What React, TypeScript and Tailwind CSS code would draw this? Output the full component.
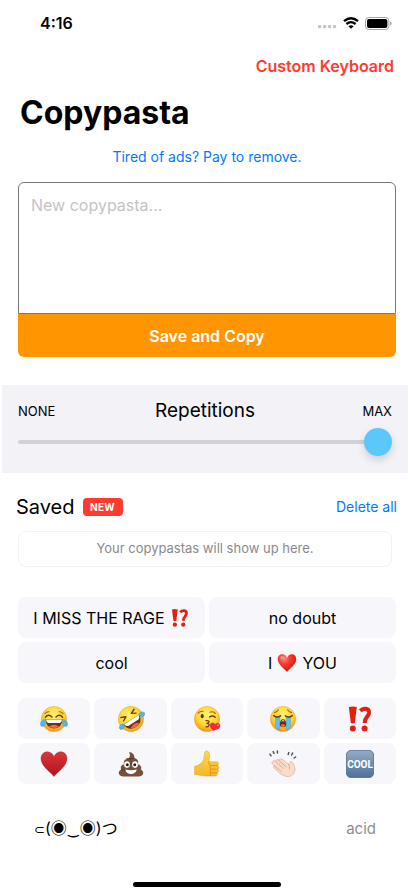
import type { ReactNode } from "react";

type IconProps = { className: string };

function Svg({ className, children }: IconProps & { children: ReactNode }) {
  return (
    <svg viewBox="0 0 28 28" className={className} aria-hidden="true">
      <defs>
        <radialGradient id="face" cx="50%" cy="35%" r="65%">
          <stop offset="0" stopColor="#fff176" />
          <stop offset="0.6" stopColor="#fdd835" />
          <stop offset="1" stopColor="#f0941f" />
        </radialGradient>
        <radialGradient id="shinyHeart" cx="35%" cy="25%" r="80%">
          <stop offset="0" stopColor="#ff8a78" />
          <stop offset="0.4" stopColor="#f5382e" />
          <stop offset="1" stopColor="#c9150f" />
        </radialGradient>
        <linearGradient id="darkHeart" x1="0" y1="0" x2="0" y2="1">
          <stop offset="0" stopColor="#d8383a" />
          <stop offset="1" stopColor="#b0121d" />
        </linearGradient>
        <linearGradient id="thumb" x1="0" y1="0" x2="0" y2="1">
          <stop offset="0" stopColor="#ffd84e" />
          <stop offset="1" stopColor="#f5b62a" />
        </linearGradient>
        <linearGradient id="coolTile" x1="0" y1="0" x2="0" y2="1">
          <stop offset="0" stopColor="#93abc6" />
          <stop offset="1" stopColor="#4f7199" />
        </linearGradient>
      </defs>
      {children}
    </svg>
  );
}

const Face = () => <circle cx="14" cy="14" r="12.6" fill="url(#face)" stroke="#e9a02b" strokeWidth="0.5" />;

function Joy({ className }: IconProps) {
  return (
    <Svg className={className}>
      <Face />
      <path d="M4.8 8.6Q6.6 6.6 9 6.8M23.2 8.6Q21.4 6.6 19 6.8" fill="none" stroke="#a8661a" strokeWidth="1.1" strokeLinecap="round" />
      <path d="M5.4 12.2Q8.4 8.6 12 12M16 12Q19.6 8.6 22.6 12.2" fill="none" stroke="#6b3f13" strokeWidth="1.5" strokeLinecap="round" />
      <path d="M5.4 14.2H22.6Q22 23.4 14 23.4T5.4 14.2Z" fill="#6b3212" />
      <path d="M6 14.4H22Q21.8 17.6 19.8 18H8.2Q6.3 17.6 6 14.4Z" fill="#fff" />
      <path d="M9 21.4Q14 18.2 19 21.4Q14 24.6 9 21.4Z" fill="#ef6a4b" />
      <path d="M5.8 14.4C2.6 14.3.2 16.6.4 19.4.7 22.2 4.6 22 5.2 19.2ZM22.2 14.4C25.4 14.3 27.8 16.6 27.6 19.4 27.3 22.2 23.4 22 22.8 19.2Z" fill="#4cb8ea" stroke="#2e98d4" strokeWidth="0.4" />
    </Svg>
  );
}

function Rofl({ className }: IconProps) {
  return (
    <Svg className={className}>
      <g transform="rotate(-32 14 14)">
        <Face />
        <path d="M6.2 7.4L10.8 9.4L6.6 11.7M21.8 7.4L17.2 9.4L21.4 11.7" fill="none" stroke="#6b3f13" strokeWidth="1.4" strokeLinecap="round" strokeLinejoin="round" />
        <path d="M4.6 14.6H23.4Q22.4 23.4 14 23.4T4.6 14.6Z" fill="#6b3212" />
        <path d="M5.4 14.8H22.6Q22 18 20 18.4H8Q6 18 5.4 14.8Z" fill="#fff" />
        <path d="M9 21.4Q14 18.2 19 21.4Q14 24.6 9 21.4Z" fill="#ef6a4b" />
        <path d="M5.2 14.4C3 12.6-.4 13.6-.8 16-1 18.4 3 18.8 4.4 17ZM22.8 14.4C25 12.6 28.4 13.6 28.8 16 29 18.4 25 18.8 23.6 17Z" fill="#4cb8ea" stroke="#2e98d4" strokeWidth="0.4" />
      </g>
    </Svg>
  );
}

function Kiss({ className }: IconProps) {
  return (
    <Svg className={className}>
      <Face />
      <path d="M5.2 8.2Q7.2 5.6 10 6.4M17 7.2Q20.4 5.8 22.4 8.6" fill="none" stroke="#a8661a" strokeWidth="1.1" strokeLinecap="round" />
      <ellipse cx="9.2" cy="11.2" rx="1.5" ry="2.1" fill="#553313" />
      <path d="M16.6 12Q19.4 9.8 22.2 12.2" fill="none" stroke="#6b3f13" strokeWidth="1.5" strokeLinecap="round" />
      <path d="M13 15.6Q17 15.4 15.8 17.4 15 18.4 13.8 18.4 17 18.6 15.8 20.8 15 22 13 21.8" fill="none" stroke="#7c3510" strokeWidth="1.3" strokeLinecap="round" strokeLinejoin="round" />
      <path d="M20.2 25.8C17.4 23 16 20.4 17.6 18.4 19.2 16.6 21.4 17.4 21.9 19.2 23.6 17.6 26.4 17.5 27.2 19.8 28.2 23 24.6 25 20.2 25.8Z" fill="#ea2c45" />
      <ellipse cx="25" cy="20" rx="1" ry="0.7" fill="#ff8c94" />
    </Svg>
  );
}

function Sob({ className }: IconProps) {
  return (
    <Svg className={className}>
      <Face />
      <path d="M5.4 7.6Q7.4 7 9.4 4.8M22.6 7.6Q20.6 7 18.6 4.8" fill="none" stroke="#a8661a" strokeWidth="1.1" strokeLinecap="round" />
      <path d="M6.6 12.2H10.8V24.8Q7.8 24.4 6.6 22ZM21.4 12.2H17.2V24.8Q20.2 24.4 21.4 22Z" fill="#62bdf0" stroke="#3f9fda" strokeWidth="0.5" />
      <path d="M4.8 10.6Q8 13.4 11.6 10.8M23.2 10.6Q20 13.4 16.4 10.8" fill="none" stroke="#6b3f13" strokeWidth="1.5" strokeLinecap="round" />
      <path d="M14 14.2C16 14.2 17.2 16.2 17.2 19.2 17.2 21.4 16.2 22.2 14 22.2S10.8 21.4 10.8 19.2C10.8 16.2 12 14.2 14 14.2Z" fill="#6b3212" />
      <path d="M12.3 16.2Q14 14.4 15.7 16.2Z" fill="#fff" />
      <ellipse cx="14" cy="20.6" rx="2.2" ry="1.4" fill="#ef6a4b" />
    </Svg>
  );
}

function Interrobang({ className }: IconProps) {
  return (
    <Svg className={className}>
      <path d="M2.8 2Q6.8 1 10.8 2L8.8 18Q6.8 18.8 4.8 18Z" fill="#e0210f" />
      <circle cx="6.8" cy="23.4" r="3" fill="#e0210f" />
      <path d="M14.2 5.8C17.6 2.4 23.4 3 23 8 22.6 11.8 18.6 12 18.6 18" fill="none" stroke="#e0210f" strokeWidth="4" />
      <circle cx="18.6" cy="23.4" r="3" fill="#e0210f" />
    </Svg>
  );
}

const heartPath =
  "M14 26.6C11.6 22.6 1 16.6 1 8.6 1 4.4 4 1.8 7.4 1.8 10.6 1.8 13 4 14 7 15 4 17.4 1.8 20.6 1.8 24 1.8 27 4.4 27 8.6 27 16.6 16.4 22.6 14 26.6Z";

function RedHeart({ className }: IconProps) {
  return (
    <Svg className={className}>
      <path d={heartPath} fill="url(#shinyHeart)" />
      <ellipse cx="7" cy="6.4" rx="3" ry="2" fill="#ffc0b0" opacity="0.6" />
    </Svg>
  );
}

function HeartSuit({ className }: IconProps) {
  return (
    <Svg className={className}>
      <path d={heartPath} fill="url(#darkHeart)" stroke="#a3141d" strokeWidth="0.4" />
    </Svg>
  );
}

function Poop({ className }: IconProps) {
  return (
    <Svg className={className}>
      <path d="M12 2C16.4 2.6 18 5.4 17 8 20.6 8.6 22 11.6 20.8 14.2 24 15 25 17.8 23.8 19.4 27.6 21 27 26.4 22 26.4H6C1 26.4.4 21 4.2 19.4 3 17.2 4.4 14.6 7.2 14.2 6 11.4 7.8 9.2 10.4 8.8 13 8.2 13.6 5 12 2Z" fill="#77503c" />
      <path d="M7.2 14.2Q14 15 17.6 11.4M4.4 19.4Q7 21 10 20.4M9.8 8.8Q14 9.6 17 8" fill="none" stroke="#503122" strokeWidth="0.9" strokeLinecap="round" />
      <ellipse cx="10" cy="14.6" rx="2.9" ry="3.3" fill="#fff" />
      <ellipse cx="18" cy="14.6" rx="2.9" ry="3.3" fill="#fff" />
      <circle cx="10.3" cy="14.8" r="1.5" fill="#2b1a12" />
      <circle cx="17.7" cy="14.8" r="1.5" fill="#2b1a12" />
      <path d="M8.2 19.6Q14 21 19.8 19.6 18.8 24 14 24T8.2 19.6Z" fill="#fff" />
    </Svg>
  );
}

function ThumbsUp({ className }: IconProps) {
  return (
    <Svg className={className}>
      <path d="M1.6 16.4C6 15.8 9.2 12.6 10.6 9.4 11.4 7 11 3.6 12 1.8 13 .4 15.6.8 16.2 3.2 16.9 6 16.3 9 15.8 11.8H23.4C26 11.8 26.2 15 24 15.4 26.8 15.6 26.8 19 24.2 19.2 26.2 19.6 26 22.6 23.8 22.8 25 23.6 24.4 26 22.4 26H12.4C8.6 26 6 24.8 1.6 24.6Z" fill="url(#thumb)" stroke="#e79d1d" strokeWidth="0.5" />
      <path d="M24 15.4H17.4Q15.4 15 15.8 11.8M24.2 19.2H17.8M23.8 22.8H17.8M17.4 15.4Q16 17.4 17.8 19.2 16.2 21 17.8 22.8 16.6 24.4 17.8 26" fill="none" stroke="#d98a18" strokeWidth="0.8" strokeLinecap="round" />
    </Svg>
  );
}

function Clap({ className }: IconProps) {
  return (
    <Svg className={className}>
      <path d="M3.4 11.6C4.2 10.2 5.6 10.6 6.6 11.4 6.6 9.6 8.4 9 9.6 10.2 10.8 8.6 12.4 8.4 13.8 9.6L19.6 14.4C20.8 14.2 20.4 11.4 21.8 11.4 24 11.8 25.6 16.2 26 19.2 26.2 22.6 23.4 26.4 19.4 26.6 15.4 26.6 12.2 24.6 9.6 22.2L5 18C4 17 4.4 15.8 5.4 15.8L3 13.4Q2.6 12.4 3.4 11.6Z" fill="#f8dcc8" stroke="#d3a88e" strokeWidth="0.6" />
      <path d="M6.6 11.4L14.2 18.4M9.6 10.2L16.8 16.6M5.4 15.8L12.2 21.6M19.6 14.4Q21 16.6 20.4 18.8" fill="none" stroke="#cfa187" strokeWidth="0.8" strokeLinecap="round" />
      <path d="M1 4.2L2 5.8M4.2 1.6L5 3.4M8.4 1V3M19.8 2.6L19.2 4.4M23.6 3L22.6 5M26.6 7L25.2 8" fill="none" stroke="#4d5263" strokeWidth="1.5" strokeLinecap="round" />
    </Svg>
  );
}

function Cool({ className }: IconProps) {
  return (
    <Svg className={className}>
      <rect x="0.4" y="0.4" width="27.2" height="27.2" rx="4.6" fill="url(#coolTile)" stroke="#496789" strokeWidth="0.8" />
      <text x="14" y="17.8" textAnchor="middle" fill="#fff" className="font-[Roboto,sans-serif] text-[10px] font-bold">
        COOL
      </text>
    </Svg>
  );
}

function StatusBar() {
  return (
    <div className="flex h-[46px] items-center justify-between pl-10 pr-[22px]">
      <span className="text-[16px] font-semibold leading-5">4:16</span>
      <div className="flex items-center gap-[6px]">
        <svg viewBox="0 0 20 12" className="h-3 w-5" aria-hidden="true">
          <g fill="#c5c5c7">
            <rect x="1" y="8" width="3.2" height="3.2" rx="1" />
            <rect x="6" y="8" width="3.2" height="3.2" rx="1" />
            <rect x="11" y="8" width="3.2" height="3.2" rx="1" />
            <rect x="16" y="8" width="3.2" height="3.2" rx="1" />
          </g>
        </svg>
        <svg viewBox="0 0 16 12" className="h-3 w-4" aria-hidden="true">
          <path d="M1 4.2Q8-1.8 15 4.2M3.4 7Q8 3.2 12.6 7" fill="none" stroke="#000" strokeWidth="2.3" />
          <path d="M8 11.8L5.4 9.2Q8 7.2 10.6 9.2Z" />
        </svg>
        <svg viewBox="0 0 27 13" className="h-[13px] w-[27px]" aria-hidden="true">
          <rect x="0.5" y="0.5" width="23.4" height="12" rx="3.4" fill="none" stroke="#a3a3a3" />
          <rect x="2" y="2" width="20.4" height="9" rx="2" />
          <path d="M25 4.4Q26.6 5 26.6 6.5T25 8.6Z" fill="#a3a3a3" />
        </svg>
      </div>
    </div>
  );
}

const emojis = [
  { name: "Tears of joy", Icon: Joy },
  { name: "Rolling on the floor laughing", Icon: Rofl },
  { name: "Blowing a kiss", Icon: Kiss },
  { name: "Loudly crying", Icon: Sob },
  { name: "Exclamation question mark", Icon: Interrobang },
  { name: "Heart suit", Icon: HeartSuit },
  { name: "Pile of poo", Icon: Poop },
  { name: "Thumbs up", Icon: ThumbsUp },
  { name: "Clapping hands", Icon: Clap },
  { name: "Cool", Icon: Cool },
];

function Phrase({ children }: { children: ReactNode }) {
  return (
    <button type="button" className="flex h-[41px] items-center justify-center gap-[5px] rounded-lg bg-[#f7f7fb] text-[16px] leading-5">
      {children}
    </button>
  );
}

export default function App() {
  return (
    <div className="flex min-h-screen flex-col bg-white font-[Inter,'Liberation_Sans',sans-serif] text-black">
      <StatusBar />
      <header>
        <div className="flex justify-end pr-5">
          <button type="button" className="h-10 text-[16px] font-semibold leading-5 text-[#ff3b30]">
            Custom Keyboard
          </button>
        </div>
        <h1 className="pl-5 pt-[7px] text-[32px] font-bold leading-10">Copypasta</h1>
        <div className="flex justify-center pt-[14px]">
          <a href="#remove-ads" className="text-[14px] leading-5 text-[#007aff]">
            Tired of ads? Pay to remove.
          </a>
        </div>
      </header>

      <main>
        <form className="mx-[18px] mt-[15px] flex flex-col" onSubmit={(e) => e.preventDefault()}>
          <textarea
            aria-label="New copypasta"
            placeholder="New copypasta..."
            className="h-[132px] resize-none rounded-t-md border border-[#77777b] px-3 py-3 text-[16px] leading-5 outline-none placeholder:text-[#c4c4c6]"
          />
          <button type="submit" className="h-[43px] rounded-b-md bg-[#ff9500] text-[16px] font-semibold leading-5 text-white">
            Save and Copy
          </button>
        </form>

        <section className="ml-[2px] mr-[6px] mt-7 h-[88px] bg-[#f2f2f7] px-4 pt-[14px]">
          <div className="flex items-center justify-between leading-6">
            <span className="flex-1 text-[13px]">NONE</span>
            <label htmlFor="repetitions" className="text-[19px]">
              Repetitions
            </label>
            <span className="flex-1 text-right text-[13px]">MAX</span>
          </div>
          <input
            id="repetitions"
            type="range"
            min="0"
            max="100"
            defaultValue="100"
            className="mt-1 block h-[30px] w-full appearance-none bg-transparent [&::-webkit-slider-runnable-track]:h-1 [&::-webkit-slider-runnable-track]:rounded-full [&::-webkit-slider-runnable-track]:bg-[#d1d1d6] [&::-webkit-slider-thumb]:-mt-3 [&::-webkit-slider-thumb]:size-7 [&::-webkit-slider-thumb]:appearance-none [&::-webkit-slider-thumb]:rounded-full [&::-webkit-slider-thumb]:bg-[#5ac8fa] [&::-webkit-slider-thumb]:shadow-[0_4px_8px_rgba(0,0,0,0.15)]"
          />
        </section>

        <section className="mt-5">
          <div className="flex h-7 items-center justify-between pl-4 pr-[17px]">
            <div className="flex items-center gap-2">
              <h2 className="text-[20px] leading-7">Saved</h2>
              <span className="flex h-[18px] w-10 items-center justify-center rounded bg-[#ff3b30] text-[10px] font-bold tracking-wide text-white">NEW</span>
            </div>
            <button type="button" className="text-[14px] leading-5 text-[#007aff]">
              Delete all
            </button>
          </div>
          <p className="ml-[18px] mr-[22px] mt-[10px] flex h-9 items-center justify-center rounded-lg border border-[#f2f2f5] text-[13px] text-[#8a8a8d]">
            Your copypastas will show up here.
          </p>
        </section>

        <div className="mx-[18px] mt-[30px] grid grid-cols-2 gap-1">
          <Phrase>
            I MISS THE RAGE <Interrobang className="size-5" />
          </Phrase>
          <Phrase>no doubt</Phrase>
          <Phrase>cool</Phrase>
          <Phrase>
            I <RedHeart className="size-5" /> YOU
          </Phrase>
        </div>

        <div className="mx-[18px] mt-[15px] grid grid-cols-5 gap-1">
          {emojis.map(({ name, Icon }) => (
            <button key={name} type="button" aria-label={name} className="flex h-[41px] items-center justify-center rounded-lg bg-[#f7f7fb]">
              <Icon className="size-7" />
            </button>
          ))}
        </div>

        <div className="mt-[33px] flex h-6 items-center justify-between pl-[34px] pr-[38px] leading-6">
          <span className="font-[Inter,'Noto_Sans_CJK_JP','DejaVu_Sans',sans-serif] text-[16px]">
            <span className="font-['DejaVu_Sans',sans-serif] text-[13px]">⊂</span>(◉‿◉)つ
          </span>
          <span className="text-[15px] text-[#8e8e93]">acid</span>
        </div>
      </main>

      <div className="mt-auto flex justify-center pb-[9px]">
        <div className="h-[5px] w-[148px] rounded-full bg-black" />
      </div>
    </div>
  );
}
